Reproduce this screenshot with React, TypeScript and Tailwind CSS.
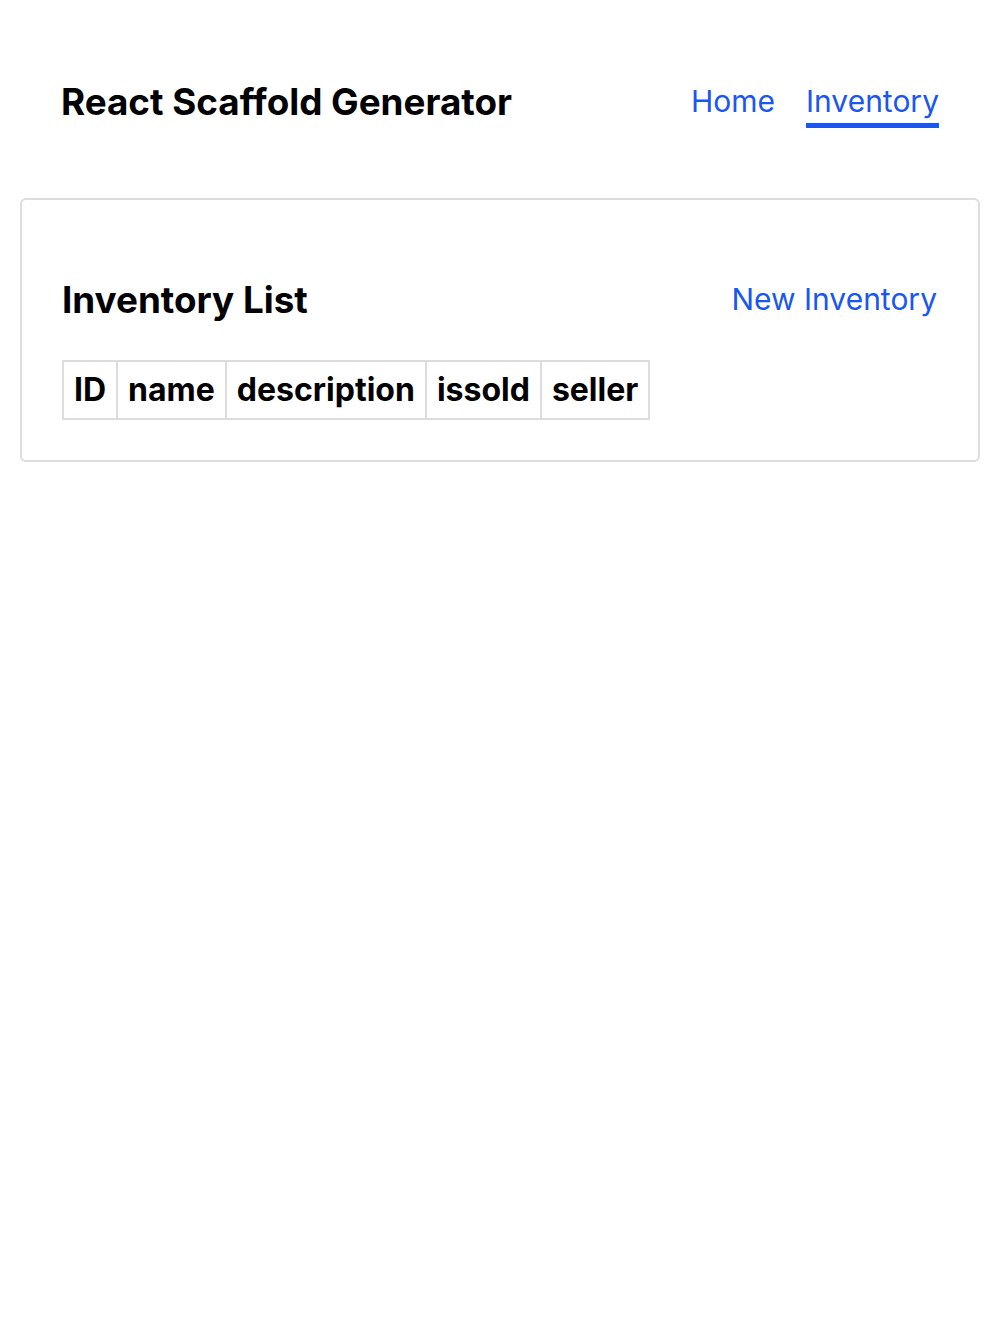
import React from 'react'

const columns = ['ID', 'name', 'description', 'issold', 'seller']

export default function App() {
  return (
    <div className="min-h-screen bg-white text-black" style={{ fontFamily: 'Inter, "Noto Sans", sans-serif' }}>
      {/* Header */}
      <header className="flex items-center justify-between px-[61px] pt-[79px] pb-[70px]">
        <h1 className="text-[36.8px] font-bold leading-[44px] -mt-[3px]">React Scaffold Generator</h1>
        <nav className="flex items-center gap-[31px] text-[30px] leading-[44px] text-[#1a56f0]">
          <a href="#" className="border-b-[5px] border-transparent">Home</a>
          <a href="#" className="border-b-[5px] border-[#1a56f0]">Inventory</a>
        </nav>
      </header>

      {/* Card */}
      <main className="px-[20px]">
        <div className="rounded-md border-2 border-[#dddddd] px-[40px] pt-[78px] pb-[40px]">
          <div className="flex items-center justify-between mb-[38px]">
            <h2 className="text-[36.8px] font-bold leading-[44px]">Inventory List</h2>
            <a href="#" className="text-[30px] leading-[40px] text-[#1a56f0] mr-[1px] -mt-[2px]">New Inventory</a>
          </div>
          <table className="border-collapse border-2 border-[#dddddd]">
            <thead>
              <tr>
                {columns.map(col => (
                  <th key={col} className="border-2 border-[#dddddd] px-[10px] py-[8px] text-left text-[32px] font-bold leading-[40px]">
                    {col}
                  </th>
                ))}
              </tr>
            </thead>
          </table>
        </div>
      </main>
    </div>
  )
}
